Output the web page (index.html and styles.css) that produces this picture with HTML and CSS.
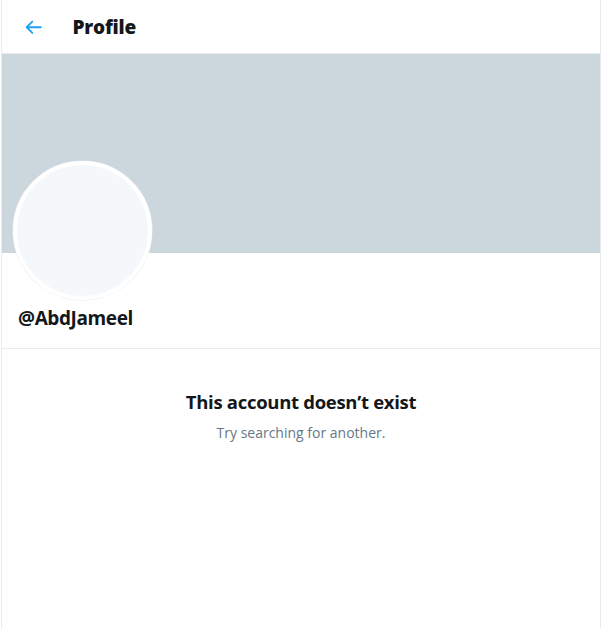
FILE: index.html
```html
<!DOCTYPE html>
<html>
<head>
<meta charset="utf-8">
<link rel="stylesheet" href="styles.css">
</head>
<body>
<div class="page">
  <header class="topbar">
    <span class="back">
      <svg viewBox="0 0 24 24" width="22.5" height="22.5"><path fill="#1da1f2" d="M20 11H7.414l4.293-4.293c.39-.39.39-1.023 0-1.414s-1.023-.39-1.414 0l-6 6c-.39.39-.39 1.023 0 1.414l6 6c.195.195.45.293.707.293s.512-.098.707-.293c.39-.39.39-1.023 0-1.414L7.414 13H20c.553 0 1-.447 1-1s-.447-1-1-1z"/></svg>
    </span>
    <h1 class="title">Profile</h1>
  </header>
  <div class="banner"></div>
  <section class="profile">
    <div class="avatar"></div>
    <div class="handle">@AbdJameel</div>
  </section>
  <section class="empty">
    <div class="empty-title">This account doesn’t exist</div>
    <div class="empty-sub">Try searching for another.</div>
  </section>
</div>
</body>
</html>
```
FILE: styles.css
```css
html, body {
  margin: 0;
  padding: 0;
  background: #fff;
}
body {
  font-family: "Open Sans", "Noto Sans", sans-serif;
  color: #14171a;
}
.page {
  margin-left: 1px;
  width: 598px;
  min-height: 628px;
  border-left: 1px solid #e6ecf0;
  border-right: 1px solid #e6ecf0;
}
.topbar {
  height: 53px;
  border-bottom: 1px solid #e6ecf0;
  display: flex;
  align-items: center;
}
.back {
  display: flex;
  margin-left: 20px;
  margin-top: 1px;
  width: 22.5px;
  height: 22.5px;
}
.title {
  margin: 0 0 0 28px;
  font-size: 19px;
  font-weight: 800;
  line-height: 24px;
  letter-spacing: -0.2px;
}
.banner {
  height: 199px;
  background: #ccd6dd;
}
.profile {
  padding: 0 12px 18px 11px;
  border-bottom: 1px solid #e6ecf0;
}
.avatar {
  width: 131px;
  height: 131px;
  border-radius: 50%;
  border: 4px solid #fff;
  background: #f5f8fa;
  margin-top: -92px;
  box-shadow: 0 0 0 0.5px #e6ecf0;
}
.handle {
  margin-top: 6px;
  margin-left: 5px;
  font-size: 19px;
  font-weight: 700;
  line-height: 24px;
  letter-spacing: -0.4px;
}
.empty {
  display: flex;
  flex-direction: column;
  align-items: center;
  padding-top: 40px;
}
.empty-title {
  font-size: 18.5px;
  font-weight: 700;
  line-height: 26px;
  letter-spacing: -0.3px;
}
.empty-sub {
  margin-top: 8px;
  font-size: 14px;
  line-height: 20px;
  color: #657786;
}
```
